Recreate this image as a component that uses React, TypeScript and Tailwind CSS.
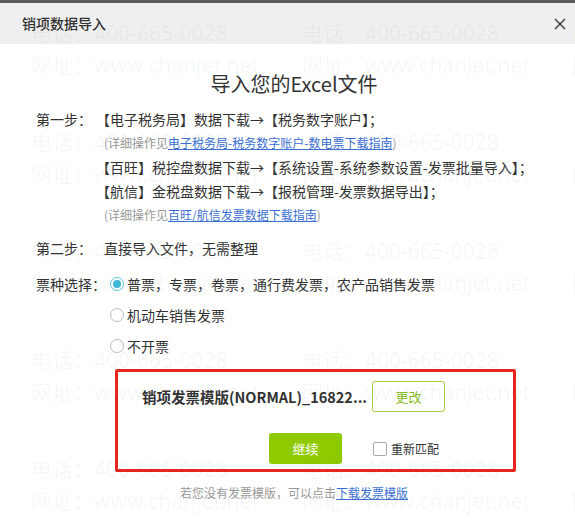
const FONT = "font-['Noto_Sans_CJK_SC','Noto_Sans',sans-serif]";

const WM_TOPS = [17, 126, 235, 344, 453];
const WM_LEFTS = [31, 302, 572];

function Watermark() {
  return (
    <div className="pointer-events-none absolute inset-0 z-10 overflow-hidden font-['Noto_Sans','Noto_Sans_CJK_SC',sans-serif]">
      {WM_TOPS.map((top) =>
        WM_LEFTS.map((left) => (
          <div
            key={`${top}-${left}`}
            className="absolute whitespace-nowrap text-[21px] leading-[32px] text-[rgba(0,0,0,0.042)]"
            style={{ top, left }}
          >
            <div>电话：400-665-0028</div>
            <div>网址：www.chanjet.net</div>
          </div>
        ))
      )}
    </div>
  );
}

function Radio({ checked, label }: { checked?: boolean; label: string }) {
  return (
    <div className="flex h-[31px] items-center">
      {checked ? (
        <span className="flex h-[14px] w-[14px] items-center justify-center rounded-full border border-[#5cc6e3] bg-white">
          <span className="h-[8px] w-[8px] rounded-full bg-[#3fb8da]" />
        </span>
      ) : (
        <span className="h-[14px] w-[14px] rounded-full border border-[#bdbdbd] bg-white" />
      )}
      <span className="ml-[3px] text-[14px] text-[#333]">{label}</span>
    </div>
  );
}

export default function App() {
  return (
    <div className={`relative h-[527px] w-[575px] overflow-hidden bg-white ${FONT}`}>
      <div className="w-[588px]">
        <div className="h-[3px] bg-[#5b5b5b]" />
        <div className="flex h-[41px] items-center justify-between bg-[#efefef] pl-[22px] pr-[22px]">
          <span className="text-[14px] font-medium text-[#333]">销项数据导入</span>
          <svg width="12" height="12" viewBox="0 0 12 12" className="text-[#333]">
            <path d="M1 1 L11 11 M11 1 L1 11" stroke="currentColor" strokeWidth="1.3" fill="none" />
          </svg>
        </div>

        <div className="pt-[27px] text-center text-[20px] leading-[26px] text-[#333]">导入您的Excel文件</div>

        <div className="mt-[10px] pl-[36px] text-[14px] leading-[24px] text-[#333]">
          <div className="flex">
            <span className="w-[60px] shrink-0">第一步：</span>
            <div>
              <div>【电子税务局】数据下载→【税务数字账户】；</div>
              <div className="pl-[8px] text-[12px] text-[#999]">
                (详细操作见
                <a className="text-[#3b6fd1] underline">电子税务局-税务数字账户-数电票下载指南</a>)
              </div>
              <div>【百旺】税控盘数据下载→【系统设置-系统参数设置-发票批量导入】；</div>
              <div>【航信】金税盘数据下载→【报税管理-发票数据导出】；</div>
              <div className="pl-[8px] text-[12px] text-[#999]">
                (详细操作见<a className="text-[#3b6fd1] underline">百旺/航信发票数据下载指南</a>)
              </div>
            </div>
          </div>

          <div className="mt-[5px] flex h-[31px] items-center">
            <span className="w-[68px] shrink-0">第二步：</span>
            <span>直接导入文件，无需整理</span>
          </div>

          <div className="mt-[5px] flex">
            <span className="flex h-[31px] w-[74px] shrink-0 items-center">票种选择：</span>
            <div>
              <Radio checked label="普票，专票，卷票，通行费发票，农产品销售发票" />
              <Radio label="机动车销售发票" />
              <Radio label="不开票" />
            </div>
          </div>
        </div>

        <div className="ml-[115px] mt-[8px] h-[103px] w-[401px] rounded-[2px] border-[3px] border-[#e8251f] pt-[9px]">
          <div className="flex h-[31px] items-center">
            <span className="w-[254px] shrink-0 pl-[24px] text-[14.5px] font-bold text-[#333]">
              销项发票模版(NORMAL)_16822...
            </span>
            <button className="h-[31px] w-[73px] rounded-[3px] border border-[#a3cf45] bg-white text-[13px] text-[#86bd25]">
              更改
            </button>
          </div>
          <div className="mt-[21px] flex h-[31px] items-center">
            <button className="ml-[151px] h-[31px] w-[73px] rounded-[3px] bg-[#8fca00] text-[13px] text-white">
              继续
            </button>
            <span className="ml-[31px] h-[14px] w-[14px] rounded-[2px] border border-[#aaa] bg-white" />
            <span className="ml-[4px] text-[12px] text-[#333]">重新匹配</span>
          </div>
        </div>

        <div className="mt-[11px] text-center text-[12px] leading-[20px] text-[#999]">
          若您没有发票模版，可以点击<a className="text-[#3b6fd1] underline">下载发票模版</a>
        </div>
      </div>
      <Watermark />
    </div>
  );
}
